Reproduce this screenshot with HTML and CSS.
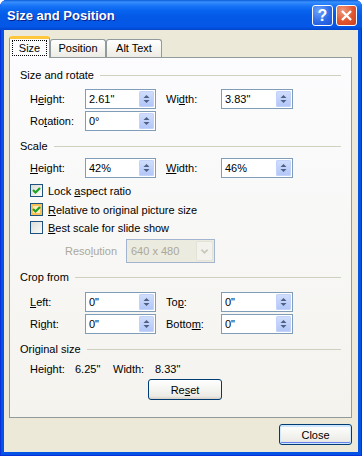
FILE: index.html
```html
<!DOCTYPE html>
<html lang="en">
<head>
    <meta charset="UTF-8">
    <title>Size and Position</title>
    <link rel="stylesheet" href="styles.css">
</head>
<body>
<div class="window">
    <div class="titlebar">
        <span class="title">Size and Position</span>
        <div class="caption-btns">
            <span class="cap help">?</span>
            <span class="cap close"><svg width="19" height="19" viewBox="0 0 19 19"><path d="M5 5 L14 14 M14 5 L5 14" stroke="#fff" stroke-width="2.4"/></svg></span>
        </div>
    </div>
    <div class="client">
        <div class="tabs">
            <div class="tab active"><span class="focus">Size</span></div>
            <div class="tab">Position</div>
            <div class="tab">Alt Text</div>
        </div>
        <div class="panel">
            <div class="group-title">Size and rotate</div>
            <div class="row" style="margin-top:7px">
                <label class="lbl">H<u>e</u>ight:</label>
                <div class="spin"><span class="val">2.61"</span><span class="spin-btn"><svg width="15" height="16" viewBox="0 0 15 16"><path d="M4.5 7 L7.5 4 L10.5 7 Z M4.5 9 L7.5 12 L10.5 9 Z" fill="#4d6185"/></svg></span></div>
                <label class="lbl second">Wi<u>d</u>th:</label>
                <div class="spin wide"><span class="val">3.83"</span><span class="spin-btn"><svg width="15" height="16" viewBox="0 0 15 16"><path d="M4.5 7 L7.5 4 L10.5 7 Z M4.5 9 L7.5 12 L10.5 9 Z" fill="#4d6185"/></svg></span></div>
            </div>
            <div class="row" style="margin-top:2px">
                <label class="lbl">Ro<u>t</u>ation:</label>
                <div class="spin"><span class="val">0°</span><span class="spin-btn"><svg width="15" height="16" viewBox="0 0 15 16"><path d="M4.5 7 L7.5 4 L10.5 7 Z M4.5 9 L7.5 12 L10.5 9 Z" fill="#4d6185"/></svg></span></div>
            </div>

            <div class="group-title" style="margin-top:8px">Scale</div>
            <div class="row" style="margin-top:5px">
                <label class="lbl"><u>H</u>eight:</label>
                <div class="spin"><span class="val">42%</span><span class="spin-btn"><svg width="15" height="16" viewBox="0 0 15 16"><path d="M4.5 7 L7.5 4 L10.5 7 Z M4.5 9 L7.5 12 L10.5 9 Z" fill="#4d6185"/></svg></span></div>
                <label class="lbl second"><u>W</u>idth:</label>
                <div class="spin wide"><span class="val">46%</span><span class="spin-btn"><svg width="15" height="16" viewBox="0 0 15 16"><path d="M4.5 7 L7.5 4 L10.5 7 Z M4.5 9 L7.5 12 L10.5 9 Z" fill="#4d6185"/></svg></span></div>
            </div>
            <div class="check-row" style="margin-top:6px">
                <span class="box"><svg width="11" height="11" viewBox="0 0 11 11"><path d="M2 5 L4.5 7.5 L9 3" fill="none" stroke="#21a121" stroke-width="2.2"/></svg></span>
                <span>Lock <u>a</u>spect ratio</span>
            </div>
            <div class="check-row" style="margin-top:6px">
                <span class="box hover"><svg width="11" height="11" viewBox="0 0 11 11"><path d="M2 5 L4.5 7.5 L9 3" fill="none" stroke="#21a121" stroke-width="2.2"/></svg></span>
                <span><u>R</u>elative to original picture size</span>
            </div>
            <div class="check-row" style="margin-top:5px">
                <span class="box"></span>
                <span><u>B</u>est scale for slide show</span>
            </div>
            <div class="res-row">
                <label class="lbl res">Reso<u>l</u>ution</label>
                <div class="combo"><span class="val">640 x 480</span><span class="combo-btn"><svg width="17" height="20" viewBox="0 0 17 20"><path d="M5 8.5 L8.5 12 L12 8.5" fill="none" stroke="#c9c7ba" stroke-width="2"/></svg></span></div>
            </div>

            <div class="group-title" style="margin-top:7px">Crop from</div>
            <div class="row" style="margin-top:8px">
                <label class="lbl"><u>L</u>eft:</label>
                <div class="spin"><span class="val">0"</span><span class="spin-btn"><svg width="15" height="16" viewBox="0 0 15 16"><path d="M4.5 7 L7.5 4 L10.5 7 Z M4.5 9 L7.5 12 L10.5 9 Z" fill="#4d6185"/></svg></span></div>
                <label class="lbl second">To<u>p</u>:</label>
                <div class="spin wide"><span class="val">0"</span><span class="spin-btn"><svg width="15" height="16" viewBox="0 0 15 16"><path d="M4.5 7 L7.5 4 L10.5 7 Z M4.5 9 L7.5 12 L10.5 9 Z" fill="#4d6185"/></svg></span></div>
            </div>
            <div class="row" style="margin-top:2px">
                <label class="lbl">Ri<u>g</u>ht:</label>
                <div class="spin"><span class="val">0"</span><span class="spin-btn"><svg width="15" height="16" viewBox="0 0 15 16"><path d="M4.5 7 L7.5 4 L10.5 7 Z M4.5 9 L7.5 12 L10.5 9 Z" fill="#4d6185"/></svg></span></div>
                <label class="lbl second">Botto<u>m</u>:</label>
                <div class="spin wide"><span class="val">0"</span><span class="spin-btn"><svg width="15" height="16" viewBox="0 0 15 16"><path d="M4.5 7 L7.5 4 L10.5 7 Z M4.5 9 L7.5 12 L10.5 9 Z" fill="#4d6185"/></svg></span></div>
            </div>

            <div class="group-title" style="margin-top:8px">Original size</div>
            <div class="orig-row">
                <span class="o1">Height:</span><span class="o2">6.25"</span><span class="o3">Width:</span><span>8.33"</span>
            </div>
            <button class="btn reset">Re<u>s</u>et</button>
        </div>
        <div class="footer">
            <button class="btn default">Close</button>
        </div>
    </div>
</div>
</body>
</html>
```

FILE: styles.css
```css
body{margin:0;background:#fff;font-family:"Liberation Sans",Arial,sans-serif;font-size:11px;color:#000}
.window{width:362px;height:456px;box-sizing:border-box;background:#0553e4;border-radius:7px 7px 0 0;display:flex;flex-direction:column;padding-bottom:4px;box-shadow:inset 1px 0 #0831d9,inset -1px 0 #0831d9,inset 0 -1px #0831d9}
.titlebar{height:30px;flex:none;display:flex;align-items:center;justify-content:space-between;padding:0 5px 0 7px;border-radius:7px 7px 0 0;background:linear-gradient(to bottom,#0a5ed8 0%,#3b8ffc 7%,#2a83fb 12%,#1572f6 22%,#0864ee 35%,#0459e6 55%,#0458e5 75%,#0557e8 88%,#0046cb 100%)}
.title{color:#fff;font-weight:bold;font-size:13px;text-shadow:1px 1px #0a1e8c;margin-top:1px}
.caption-btns{display:flex;gap:3px;margin-top:1px}
.cap{width:21px;height:21px;box-sizing:border-box;border:1px solid #fff;border-radius:3px;display:flex;align-items:center;justify-content:center}
.help{background:radial-gradient(circle at 30% 25%,#6da3fb,#2a69e7 60%,#1e55d6);color:#fff;font-weight:bold;font-size:16px}
.close{background:radial-gradient(circle at 30% 25%,#ef9a7e,#e0552f 55%,#cc3f1c)}
.client{flex:1;margin:0 4px;background:#ece9d8;padding-top:6px;display:flex;flex-direction:column}
.tabs{display:flex;align-items:flex-end;height:21px;margin-left:5px}
.tab{box-sizing:border-box;width:56px;height:18px;border:1px solid #919b9c;border-bottom:none;border-radius:3px 3px 0 0;background:linear-gradient(#fff,#f4f3ee 60%,#ecebe6);text-align:center;line-height:17px}
.tab.active{width:41px;height:22px;margin-bottom:-1px;position:relative;z-index:1;background:#fcfcfe;border-top:3px solid #ffc83c;box-shadow:inset 0 -1px #fcfcfe;line-height:14px;padding-top:0}
.tab.active .focus{display:inline-block;border:1px dotted #000;padding:1px 6px 0;line-height:13px;margin-top:1px}
.panel{height:361px;box-sizing:border-box;margin:0 6px 0 5px;border:1px solid #919b9c;background:linear-gradient(#fcfcfe,#f4f3ee);padding:10px 10px 0 10px;display:flex;flex-direction:column}
.group-title{display:flex;align-items:center;height:14px;line-height:14px}
.group-title::after{content:"";flex:1;height:1px;background:#d0d0bf;margin-left:6px}
.row{display:flex;align-items:center;height:20px;padding-left:10px}
.lbl{width:55px;flex:none}
.lbl.second{margin-left:10px}
.spin{width:71px;height:20px;box-sizing:border-box;border:1px solid #7f9db9;background:#fff;display:flex;align-items:stretch;padding:1px}
.spin.wide{width:72px}
.val{flex:1;padding-left:2px;line-height:16px}
.spin-btn{width:15px;border-radius:2px;background:linear-gradient(#d2defc,#b0c5f8);box-shadow:inset 0 0 0 1px #c2d2fb;display:flex}
.check-row{display:flex;align-items:center;height:13px;padding-left:10px}
.box{width:13px;height:13px;box-sizing:border-box;border:1px solid #1c5180;background:linear-gradient(135deg,#dcdcd7,#fbfbf9);margin-right:5px;display:flex;flex:none}
.box.hover{box-shadow:inset 0 0 0 2px #f9c257;background:linear-gradient(135deg,#fee3a6,#fdf3da)}
.res-row{display:flex;align-items:center;height:24px;padding-left:45px;margin-top:5px}
.lbl.res{width:61px;color:#aca899}
.combo{width:89px;height:24px;box-sizing:border-box;border:1px solid #a3b5ce;background:#ebebe0;display:flex;padding:1px;color:#aca899}
.combo .val{line-height:20px;padding-left:3px}
.combo-btn{width:17px;border:1px solid #e4e3da;box-sizing:border-box;border-radius:2px;background:#f3f2ec;display:flex;align-items:center}
.orig-row{display:flex;height:14px;line-height:14px;padding-left:10px;margin-top:6px}
.o1{width:45px}
.o2{width:38px}
.o3{width:42px}
.btn{font-family:inherit;font-size:11px;color:#000;box-sizing:border-box;border:1px solid #003c74;border-radius:3px;background:linear-gradient(#fff,#f4f4f0 50%,#ecebe6 85%,#d6d0c5);padding:0}
.reset{width:74px;height:21px;margin:3px 0 0 128px}
.footer{display:flex;justify-content:flex-end;padding-right:6px;margin-top:6px}
.default{width:73px;height:21px;box-shadow:inset 0 0 0 1px #cee7ff,inset 0 -2px #6982ee,inset 0 2px #cee7ff}
```
